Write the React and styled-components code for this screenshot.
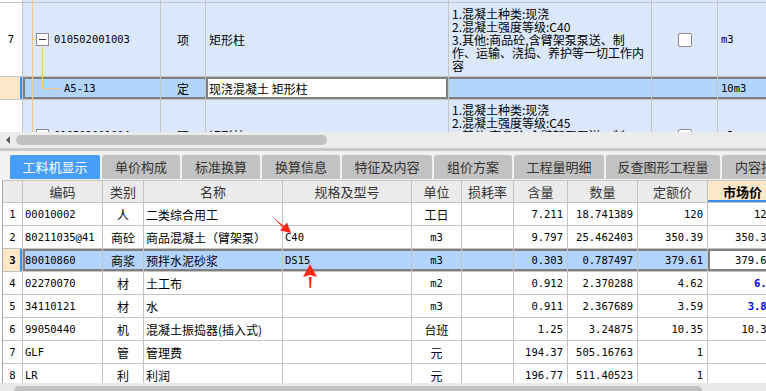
import React from "react";
import styled, { createGlobalStyle } from "styled-components";

const CJK = `"Noto Sans CJK SC", "Noto Sans", sans-serif`;
const MONO = `"DejaVu Sans Mono", "Liberation Mono", "Noto Sans CJK SC", monospace`;
const GRID = "#c4c4c4";
const DARK = "#7f7f7f";
const ROWBLUE = "#dbe8fc";
const SEL = "#b3d4fc";
const PEACH = "#fde7c9";
const MARK = "#3d8ee8";

const GlobalStyle = createGlobalStyle`
  html, body { margin: 0; padding: 0; background: #fff; }
  body { font-family: ${CJK}; font-size: 12px; color: #000; }
  * { box-sizing: border-box; }
`;

const isAscii = (s) => /^[\x20-\x7e]+$/.test(s);

// inset borders for the selected row / focused cell
const shadow = (p) => {
  const s = [];
  if (p.$sel) s.push(`inset 0 2px 0 ${DARK}`, `inset 0 -2px 0 ${DARK}`);
  if (p.$edgeL) s.push(`inset 2px 0 0 ${DARK}`);
  if (p.$edgeR) s.push(`inset -2px 0 0 ${DARK}`);
  if (p.$marker) s.push(`inset -2px 0 0 ${MARK}`);
  if (p.$underline) s.push(`inset 0 -2px 0 ${MARK}`);
  return s.length ? s.join(", ") : "none";
};

const Page = styled.div`
  position: relative;
  width: 766px;
  height: 391px;
  overflow: hidden;
  background: #fff;
  display: flex;
  flex-direction: column;
`;

/* ---------- upper list ---------- */

const Upper = styled.div`
  position: relative;
  flex: none;
  height: 132px;
  overflow: hidden;
`;

const TopRow = styled.div`
  display: grid;
  grid-template-columns: 23px 138px 45px 243px 203px 66px 80px;
  height: ${(p) => p.$h}px;
  border-bottom: 1px solid ${GRID};
  background: ${(p) => (p.$sel ? SEL : ROWBLUE)};
`;

const TopCell = styled.div`
  display: flex;
  align-items: center;
  justify-content: ${(p) => (p.$center ? "center" : "flex-start")};
  padding-left: ${(p) => (p.$center ? 0 : p.$indent ?? 3)}px;
  border-right: 1px solid ${GRID};
  background: ${(p) => p.$bg || "transparent"};
  box-shadow: ${shadow};
  font-weight: ${(p) => (p.$bold ? 700 : 400)};
  overflow: hidden;
  white-space: pre;
  line-height: 13px;
`;

const Txt = styled.span`
  font-family: ${(p) => (p.$mono ? MONO : CJK)};
  font-size: ${(p) => (p.$mono ? "10.5px" : p.$size || "12px")};
  color: ${(p) => p.$color || "inherit"};
`;

const ExpandBox = styled.span`
  position: relative;
  flex: none;
  width: 13px;
  height: 13px;
  margin-right: 5px;
  border: 1px solid #8c8c8c;
  background: #fff;
  &::after {
    content: "";
    position: absolute;
    left: 2px;
    right: 2px;
    top: 5px;
    height: 1px;
    background: #333;
  }
`;

const CheckBox = styled.span`
  width: 14px;
  height: 14px;
  border: 1px solid #8a8a8a;
  border-radius: 2px;
  background: #fff;
`;

const TreeLines = styled.svg`
  position: absolute;
  left: 0;
  top: 0;
  pointer-events: none;
`;

const HScroll = styled.div`
  flex: none;
  height: 16px;
  background: #ececec;
  display: flex;
  align-items: center;
  gap: 6px;
  padding-left: 6px;
`;

const LeftArrow = styled.span`
  width: 0;
  height: 0;
  border-top: 4px solid transparent;
  border-bottom: 4px solid transparent;
  border-right: 4px solid #5a5a5a;
`;

const Thumb = styled.div`
  flex: none;
  width: ${(p) => p.$w}px;
  height: 10px;
  border-radius: 5px;
  background: #c1c1c1;
`;

const Separator = styled.div`
  flex: none;
  height: 3px;
  background: #c9c9c9;
`;

/* ---------- tabs ---------- */

const TabBar = styled.div`
  flex: none;
  height: 29px;
  background: #f1f1f1;
  display: flex;
  align-items: flex-start;
  gap: 2px;
  padding: 4px 0 0 10px;
  overflow: hidden;
`;

const Tab = styled.div`
  flex: none;
  width: ${(p) => p.$w}px;
  height: 24px;
  line-height: 24px;
  text-align: center;
  font-size: 13px;
  white-space: nowrap;
  overflow: hidden;
  border-radius: 2px 2px 0 0;
  background: ${(p) => (p.$active ? "#479ef8" : "#c2c2c2")};
  color: ${(p) => (p.$active ? "#fff" : "#333")};
`;

/* ---------- lower grid ---------- */

const Lower = styled.div`
  flex: none;
  height: 203px;
  overflow: hidden;
`;

const LowRow = styled.div`
  display: grid;
  grid-template-columns: 20px 80px 41px 139px 129px 50px 52px 54px 70px 70px 70px;
  height: 23px;
  margin-left: 2px;
  border-left: 1px solid #a9a9a9;
  border-bottom: 1px solid ${GRID};
  border-top: ${(p) => (p.$head ? `1px solid ${GRID}` : "none")};
  background: ${(p) => (p.$head ? "#ebebeb" : p.$sel ? SEL : "#fff")};
`;

const LowCell = styled.div`
  display: flex;
  align-items: center;
  justify-content: ${(p) =>
    p.$align === "right" ? "flex-end" : p.$align === "center" ? "center" : "flex-start"};
  padding: ${(p) => (p.$align === "right" ? "0 4px 0 0" : p.$align === "left" ? "0 0 0 2px" : "0")};
  border-right: 1px solid ${GRID};
  background: ${(p) => p.$bg || "transparent"};
  box-shadow: ${shadow};
  font-weight: ${(p) => (p.$bold ? 700 : 400)};
  color: ${(p) => (p.$head ? "#333" : "#000")};
  white-space: nowrap;
  overflow: hidden;
`;

const BottomScroll = styled.div`
  flex: none;
  height: 8px;
  background: #e9e9e9;
  padding: 3px 0 0 14px;
  overflow: hidden;
`;

const Arrows = styled.svg`
  position: absolute;
  left: 0;
  top: 0;
  pointer-events: none;
`;

/* ---------- data ---------- */

const descA = "1.混凝土种类:现浇\n2.混凝土强度等级:C40\n3.其他:商品砼,含臂架泵泵送、制\n作、运输、浇捣、养护等一切工作内\n容";
const descC = "1.混凝土种类:现浇\n2.混凝土强度等级:C45\n3.其他:商品砼,含臂架泵泵送、制\n作、运输、浇捣、养护等一切工作内\n容";

const tabs = [
  { t: "工料机显示", w: 90 },
  { t: "单价构成", w: 78 },
  { t: "标准换算", w: 78 },
  { t: "换算信息", w: 78 },
  { t: "特征及内容", w: 90 },
  { t: "组价方案", w: 78 },
  { t: "工程量明细", w: 90 },
  { t: "反查图形工程量", w: 114 },
  { t: "内容指引", w: 78 },
];

const cols = [
  { key: "no", title: "", align: "center" },
  { key: "code", title: "编码", align: "left" },
  { key: "type", title: "类别", align: "center" },
  { key: "name", title: "名称", align: "left" },
  { key: "spec", title: "规格及型号", align: "left" },
  { key: "unit", title: "单位", align: "center" },
  { key: "loss", title: "损耗率", align: "right" },
  { key: "qty", title: "含量", align: "right" },
  { key: "amount", title: "数量", align: "right" },
  { key: "price", title: "定额价", align: "right" },
  { key: "market", title: "市场价", align: "right" },
];

const rows = [
  { no: "1", code: "00010002", type: "人", name: "二类综合用工", spec: "", unit: "工日", loss: "", qty: "7.211", amount: "18.741389", price: "120", market: "120" },
  { no: "2", code: "80211035@41", type: "商砼", name: "商品混凝土（臂架泵）", spec: "C40", unit: "m3", loss: "", qty: "9.797", amount: "25.462403", price: "350.39", market: "350.39" },
  { no: "3", code: "80010860", type: "商浆", name: "预拌水泥砂浆", spec: "DS15", unit: "m3", loss: "", qty: "0.303", amount: "0.787497", price: "379.61", market: "379.61", sel: true },
  { no: "4", code: "02270070", type: "材", name: "土工布", spec: "", unit: "m2", loss: "", qty: "0.912", amount: "2.370288", price: "4.62", market: "6.5", blue: true },
  { no: "5", code: "34110121", type: "材", name: "水", spec: "", unit: "m3", loss: "", qty: "0.911", amount: "2.367689", price: "3.59", market: "3.85", blue: true },
  { no: "6", code: "99050440", type: "机", name: "混凝土振捣器(插入式)", spec: "", unit: "台班", loss: "", qty: "1.25", amount: "3.24875", price: "10.35", market: "10.35" },
  { no: "7", code: "GLF", type: "管", name: "管理费", spec: "", unit: "元", loss: "", qty: "194.37", amount: "505.16763", price: "1", market: "1" },
  { no: "8", code: "LR", type: "利", name: "利润", spec: "", unit: "元", loss: "", qty: "196.77", amount: "511.40523", price: "1", market: "1" },
];

const T = ({ v, ...rest }) => <Txt $mono={isAscii(v)} {...rest}>{v}</Txt>;

const ItemRow = ({ h, no, code, name, desc }) => (
  <TopRow $h={h}>
    <TopCell $center $bg="#fff">{no && <T v={no} />}</TopCell>
    <TopCell $indent={13}>
      <ExpandBox />
      <T v={code} />
    </TopCell>
    <TopCell $center><T v="项" /></TopCell>
    <TopCell><T v={name} /></TopCell>
    <TopCell><Txt>{desc}</Txt></TopCell>
    <TopCell $center><CheckBox /></TopCell>
    <TopCell><T v="m3" /></TopCell>
  </TopRow>
);

const App = () => {
  return (
    <Page>
      <GlobalStyle />
      <Upper>
        <TopRow $h={3}>
          <TopCell $bg="#fff" />
          <TopCell /><TopCell /><TopCell /><TopCell /><TopCell /><TopCell />
        </TopRow>
        <ItemRow h={74} no="7" code="010502001003" name="矩形柱" desc={descA} />
        <TopRow $h={23} $sel>
          <TopCell $center $bg={PEACH} $marker />
          <TopCell $sel $edgeL $indent={41}><T v="A5-13" /></TopCell>
          <TopCell $sel $center><T v="定" /></TopCell>
          <TopCell $sel $edgeL $edgeR $bg="#fff"><T v="现浇混凝土 矩形柱" /></TopCell>
          <TopCell $sel />
          <TopCell $sel />
          <TopCell $sel><T v="10m3" /></TopCell>
        </TopRow>
        <ItemRow h={72} code="010502001004" name="矩形柱" desc={descC} />
        <TreeLines width="70" height="132" viewBox="0 0 70 132">
          <g stroke="#f8c57c" strokeWidth="1" fill="none">
            <path d="M32.5 0V132" />
            <path d="M33 39.5H36" />
            <path d="M42.5 46V88.5H60" />
          </g>
        </TreeLines>
      </Upper>

      <HScroll>
        <LeftArrow />
        <Thumb $w={311} />
      </HScroll>
      <Separator />

      <TabBar>
        {tabs.map((t, i) => (
          <Tab key={t.t} $w={t.w} $active={i === 0}>{t.t}</Tab>
        ))}
      </TabBar>

      <Lower>
        <LowRow $head>
          {cols.map((c) => (
            <LowCell
              key={c.key}
              $align="center"
              $head
              $bold={c.key === "market"}
              $bg={c.key === "market" ? PEACH : undefined}
              $underline={c.key === "market"}
            >
              <Txt $size="13px" $color={c.key === "market" ? "#000" : "#333"}>{c.title}</Txt>
            </LowCell>
          ))}
        </LowRow>
        {rows.map((r) => (
          <LowRow key={r.no} $sel={r.sel}>
            {cols.map((c) => {
              const v = r[c.key];
              const isNo = c.key === "no";
              const isMarket = c.key === "market";
              const sel = r.sel && !isNo;
              return (
                <LowCell
                  key={c.key}
                  $align={c.align}
                  $sel={sel}
                  $edgeL={r.sel && (c.key === "code" || isMarket)}
                  $edgeR={r.sel && isMarket}
                  $marker={r.sel && isNo}
                  $bg={r.sel && isNo ? PEACH : r.sel && isMarket ? "#fff" : undefined}
                  $bold={(r.sel && isNo) || (r.blue && isMarket)}
                >
                  {v && <T v={v} $color={r.blue && isMarket ? "#0000ee" : undefined} />}
                </LowCell>
              );
            })}
          </LowRow>
        ))}
      </Lower>

      <BottomScroll>
        <Thumb $w={688} />
      </BottomScroll>

      <Arrows width="766" height="391" viewBox="0 0 766 391">
        <g fill="#ff2616">
          <polygon points="271,215 273,217 285.5,227.5 284,229" />
          <polygon points="291,233 280,230.5 287,222.5" />
          <polygon points="309,277 311.5,277 311,288 309.5,288" />
          <polygon points="310,264 317,277 310,275 303,277" />
        </g>
      </Arrows>
    </Page>
  );
};

export default App;
